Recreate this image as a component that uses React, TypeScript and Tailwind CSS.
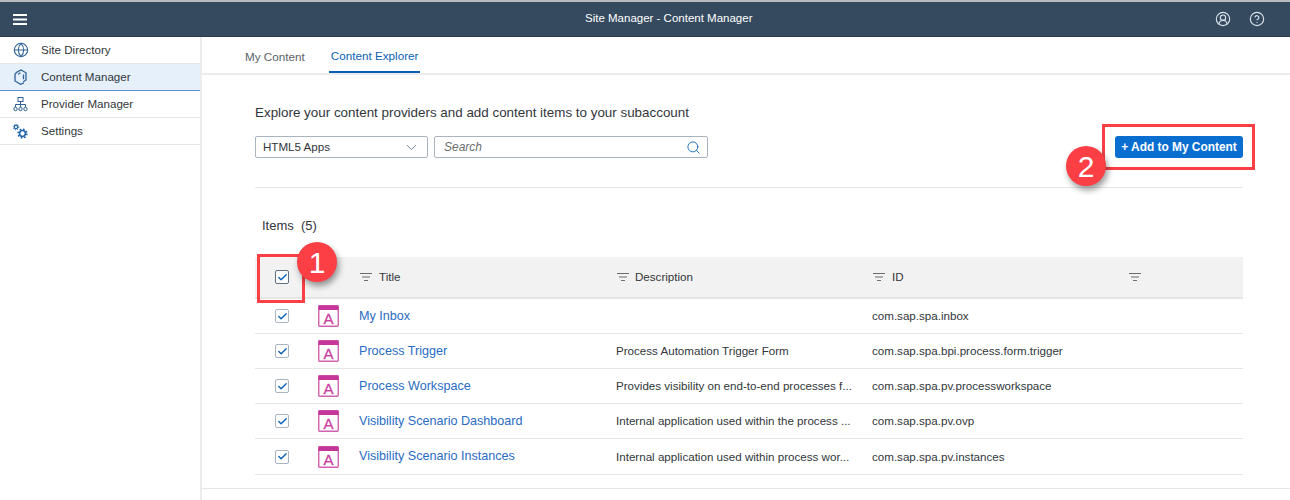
import { ChevronDown, Globe, Search, CircleHelp, CircleUserRound, Check } from "lucide-react";

const rows = [
    { title: "My Inbox", description: "", id: "com.sap.spa.inbox", h: "h-[35px]" },
    { title: "Process Trigger", description: "Process Automation Trigger Form", id: "com.sap.spa.bpi.process.form.trigger", h: "h-[35px]" },
    { title: "Process Workspace", description: "Provides visibility on end-to-end processes f...", id: "com.sap.spa.pv.processworkspace", h: "h-[35px]" },
    { title: "Visibility Scenario Dashboard", description: "Internal application used within the process ...", id: "com.sap.spa.pv.ovp", h: "h-[35px]" },
    { title: "Visibility Scenario Instances", description: "Internal application used within process wor...", id: "com.sap.spa.pv.instances", h: "h-[36px]" },
];

function FilterIcon() {
    return (
        <svg width="12" height="10" viewBox="0 0 12 10" className="ml-px text-[#6a6d70]" fill="none" stroke="currentColor">
            <path d="M0 1.5h12M2 5h8M4 8.5h4" />
        </svg>
    );
}

function HexIcon() {
    return (
        <svg width="15" height="16" viewBox="0 0 15 16" fill="none" stroke="#2f6299" strokeWidth="1.3">
            <path d="M4.3 2.8 8 1l5 2.8V11l-3 2" />
            <path d="M11 14 7.5 15.2 2 12V5" />
            <path d="M2 5l2.3-2.2M5 5.2l2.5-1.4M10.5 5.5v4.8" />
        </svg>
    );
}

function TreeIcon() {
    return (
        <svg width="15" height="15" viewBox="0 0 15 15" fill="none" stroke="#2f6299" strokeWidth="1">
            <rect x="5" y="0.5" width="5" height="4" />
            <path d="M7.5 4.5v3M2.5 10V7.5h10V10M7.5 7.5V10" />
            <circle cx="2.5" cy="12" r="1.7" />
            <circle cx="7.5" cy="12" r="1.7" />
            <circle cx="12.5" cy="12" r="1.7" />
        </svg>
    );
}

function GearsIcon() {
    return (
        <svg width="15" height="15" viewBox="0 0 15 15" fill="none" stroke="#1f63a8">
            <circle cx="3" cy="3" r="1.7" strokeWidth="1.2" />
            <circle cx="3" cy="3" r="2.8" strokeWidth="1" strokeDasharray="1.1 1.1" />
            <circle cx="9.5" cy="9.5" r="2.9" strokeWidth="1.5" />
            <circle cx="9.5" cy="9.5" r="4.4" strokeWidth="1.5" strokeDasharray="1.7 1.75" />
        </svg>
    );
}

function AppIcon() {
    return (
        <svg width="21" height="22" viewBox="0 0 21 22" fill="none">
            <rect x="0.75" y="0.75" width="19.5" height="20.5" rx="1" stroke="#d262ae" strokeWidth="1.4" fill="#fff" />
            <rect x="0.5" y="0.5" width="20" height="4.5" fill="#c4369a" />
            <text x="10.5" y="18.5" textAnchor="middle" fontSize="15" fill="#c9409f" stroke="#c9409f" strokeWidth="0.3" fontFamily="Liberation Sans, sans-serif">A</text>
        </svg>
    );
}

function CheckBox({ dark }: { dark?: boolean }) {
    return (
        <div className={`flex h-[14px] w-[14px] items-center justify-center rounded-[2px] border bg-white ${dark ? "border-[#5f6f7f]" : "border-[#a9b4be]"}`}>
            <Check className="h-[11px] w-[11px] text-[#0a5fb4]" strokeWidth={3} />
        </div>
    );
}

function SideItem({ icon, label, active }: { icon: React.ReactNode; label: string; active?: boolean }) {
    return (
        <div className={`flex h-[27px] items-center border-b ${active ? "border-[#5f93c9] bg-[#e5f0fa]" : "border-[#e5e5e5]"}`}>
            <div className="flex w-[41px] shrink-0 justify-center">{icon}</div>
            <span className="text-[11.6px] text-[#32363a]">{label}</span>
        </div>
    );
}

function Badge({ n, className }: { n: number; className: string }) {
    return (
        <div className={`absolute flex h-[40px] w-[40px] items-center justify-center rounded-full bg-[#fb3f45] text-[30px] text-white shadow-[2px_4px_6px_rgba(0,0,0,0.4)] ${className}`}>
            {n}
        </div>
    );
}

export default function App() {
    return (
        <div className="relative h-[500px] w-[1290px] overflow-hidden bg-white font-['Liberation_Sans',sans-serif] text-[#32363a]">
            <header className="flex h-[37px] items-center border-t-2 border-b border-t-[#b8bcc0] border-b-[#2a3a4c] bg-[#354a5f] text-white">
                <div className="flex w-[40px] justify-center">
                    <svg width="14" height="11" viewBox="0 0 14 11" stroke="#fff" strokeWidth="2"><path d="M0 1h14M0 5.5h14M0 10h14" /></svg>
                </div>
                <span className="ml-[545px] text-[11.5px]">Site Manager - Content Manager</span>
                <div className="ml-auto flex items-center gap-[18px] pr-[25px] text-[#d9e2ea]">
                    <CircleUserRound className="h-[16px] w-[16px]" strokeWidth={1.7} />
                    <CircleHelp className="h-[16px] w-[16px]" strokeWidth={1.7} />
                </div>
            </header>

            <div className="flex h-[463px]">
                <aside className="w-[202px] shrink-0 border-r-2 border-[#ececec]">
                    <SideItem icon={<Globe className="h-[16px] w-[16px] text-[#2f6299]" strokeWidth={1.6} />} label="Site Directory" />
                    <SideItem icon={<HexIcon />} label="Content Manager" active />
                    <SideItem icon={<TreeIcon />} label="Provider Manager" />
                    <SideItem icon={<GearsIcon />} label="Settings" />
                </aside>

                <main className="flex min-w-0 flex-1 flex-col">
                    <nav className="flex h-[38px] gap-[24px] border-b-2 border-[#ececec] pl-[43px] text-[11.7px]">
                        <div className="flex items-center pt-[3px] text-[#5c6166]">My Content</div>
                        <div className="flex items-center border-b-2 border-[#0a5fb4] px-[2px] pt-[3px] text-[#0a5fb4]">Content Explorer</div>
                    </nav>

                    <div className="mr-[47px] ml-[53px]">
                        <p className="mt-[29px] text-[13.4px] leading-[18px]">Explore your content providers and add content items to your subaccount</p>
                        <div className="mt-[14px] flex items-center border-b border-[#e5e5e5] pb-[29px]">
                            <div className="flex h-[22px] w-[173px] items-center justify-between rounded-[2px] border border-[#a9b4be] pr-[7px] pl-[7px] text-[11.6px]">
                                HTML5 Apps
                                <ChevronDown className="h-[17px] w-[17px] text-[#5f6f7f]" strokeWidth={1.2} />
                            </div>
                            <div className="ml-[6px] flex h-[22px] w-[274px] items-center justify-between rounded-[2px] border border-[#a9b4be] pr-[6px] pl-[9px] text-[12px] text-[#6a6d70] italic">
                                Search
                                <Search className="h-[15px] w-[15px] text-[#0a5fb4]" strokeWidth={1.4} />
                            </div>
                            <button className="ml-auto h-[22px] w-[128px] rounded-[3px] bg-[#0a6ed1] pt-px text-[11.9px] font-bold text-white">+ Add to My Content</button>
                        </div>

                        <div className="mt-[29px] pl-[7px] text-[13px] leading-[18px]">Items&nbsp; (5)</div>

                        <div className="mt-[22px] grid h-[42px] grid-cols-[63px_41px_257px_256px_256px_1fr] items-center border-b-2 border-[#e5e5e5] bg-[#f2f2f2] text-[11.6px]">
                            <div className="pl-[20px]"><CheckBox dark /></div>
                            <div />
                            <div className="flex items-center gap-[7px]"><FilterIcon />Title</div>
                            <div className="flex items-center gap-[6px]"><FilterIcon />Description</div>
                            <div className="flex items-center gap-[7px]"><FilterIcon />ID</div>
                            <div className="flex items-center"><FilterIcon /></div>
                        </div>

                        {rows.map((r) => (
                            <div key={r.title} className={`grid grid-cols-[63px_41px_257px_256px_256px_1fr] items-center border-b border-[#e5e5e5] text-[11.6px] ${r.h}`}>
                                <div className="pl-[20px]"><CheckBox /></div>
                                <AppIcon />
                                <span className="text-[12.6px] text-[#2a6cc4]">{r.title}</span>
                                <span>{r.description}</span>
                                <span>{r.id}</span>
                                <div />
                            </div>
                        ))}
                    </div>
                </main>
            </div>

            <div className="absolute top-[488px] right-0 left-[202px] h-px bg-[#e5e5e5]" />

            <div className="absolute top-[254px] left-[257px] h-[49px] w-[48px] border-[3px] border-[#fb3f45]" />
            <div className="absolute top-[124px] left-[1102px] h-[46px] w-[153px] border-[3px] border-[#fb3f45]" />
            <Badge n={1} className="top-[242px] left-[297px]" />
            <Badge n={2} className="top-[146px] left-[1066px]" />
        </div>
    );
}
